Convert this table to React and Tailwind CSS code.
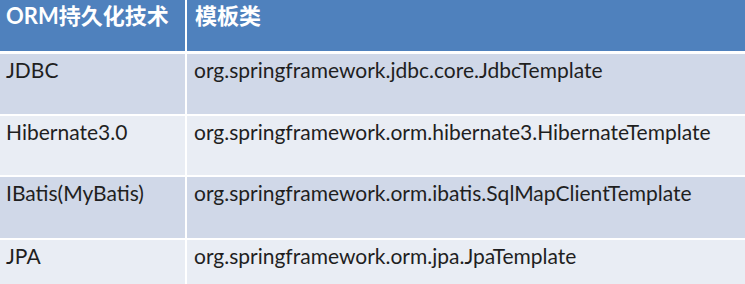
const ROWS = [
  { tech: 'JDBC', tpl: 'org.springframework.jdbc.core.JdbcTemplate', bg: 'bg-[#d0d8e8]', h: 'h-[60px]' },
  { tech: 'Hibernate3.0', tpl: 'org.springframework.orm.hibernate3.HibernateTemplate', bg: 'bg-[#e9edf4]', h: 'h-[59px]' },
  { tech: 'IBatis(MyBatis)', tpl: 'org.springframework.orm.ibatis.SqlMapClientTemplate', bg: 'bg-[#d0d8e8]', h: 'h-[61px]' },
  { tech: 'JPA', tpl: 'org.springframework.orm.jpa.JpaTemplate', bg: 'bg-[#e9edf4]', h: 'h-[44px]' },
];

export default function App() {
  return (
    <div className="w-[745px] h-[284px] overflow-hidden bg-white font-['Lato','Noto_Sans_CJK_SC',sans-serif] text-[#1f1f1f]">
      <div className="grid grid-cols-[185px_1fr] gap-x-[2px] bg-white">
        <div className="h-[51px] bg-[#4f81bd] pl-[6px] pt-[2px] text-[22px] font-bold text-white leading-[28px]">ORM持久化技术</div>
        <div className="h-[51px] bg-[#4f81bd] pl-[8px] pt-[2px] text-[22px] font-bold text-white leading-[28px]">模板类</div>
        <div className="col-span-2 h-[3px]" />
        {ROWS.map((r, i) => (
          <div key={r.tech} className="contents">
            <div className={`${r.bg} ${r.h} pl-[6px] pt-[2px] text-[21px] leading-[28px]`}>{r.tech}</div>
            <div className={`${r.bg} ${r.h} pl-[7px] pt-[2px] text-[21px] leading-[28px]`}>{r.tpl}</div>
            {i < ROWS.length - 1 && <div className="col-span-2 h-[2px]" />}
          </div>
        ))}
      </div>
    </div>
  );
}
